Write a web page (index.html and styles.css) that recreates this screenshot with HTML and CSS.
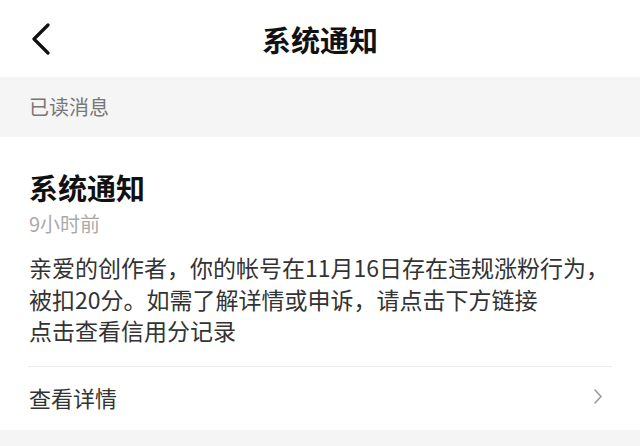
FILE: index.html
```html
<!DOCTYPE html>
<html>
<head>
  <meta charset="utf-8" />
  <title>系统通知</title>
  <link rel="stylesheet" href="styles.css">
</head>
<body>

<div class='topbar'>
  <div class='topbar-left'>
    <svg class='back' width="22" height="32" viewBox="0 0 22 32">
      <path d="M18 2 L4 16 L18 30" fill="none" stroke="#111" stroke-width="3.2" stroke-linecap="round" stroke-linejoin="round"/>
    </svg>
  </div>
  <div class='topbar-title'>系统通知</div>
  <div></div>
</div>

<div class='section-label'>已读消息</div>

<div class='card'>
  <div class='card-title'>系统通知</div>
  <div class='card-time'>9小时前</div>
  <div class='card-body'>
    亲爱的创作者，你的帐号在11月16日存在违规涨粉行为，<br>
    被扣20分。如需了解详情或申诉，请点击下方链接<br>
    点击查看信用分记录
  </div>
  <div class='card-link'>
    <span>查看详情</span>
    <svg class='arrow' width="10" height="17" viewBox="0 0 10 17">
      <path d="M2 2 L8 8.5 L2 15" fill="none" stroke="#9a9a9a" stroke-width="1.6" stroke-linecap="round" stroke-linejoin="round"/>
    </svg>
  </div>
</div>

</body>
</html>
```

FILE: styles.css
```css
*{margin:0;padding:0;}
body{
  background:#f5f5f5;
  font-family:"Noto Sans CJK SC","Noto Sans",sans-serif;
}
.topbar{
  height:77px;
  background:#fff;
  display:grid;
  grid-template-columns:1fr auto 1fr;
  align-items:center;
}
.topbar-left{
  padding-left:30px;
  display:flex;
  align-items:center;
}
.back{
  display:block;
  margin-top:1px;
}
.topbar-title{
  font-size:29px;
  font-weight:bold;
  color:#111;
  line-height:40px;
  margin-top:1px;
}
.section-label{
  height:60px;
  line-height:60px;
  padding-left:29px;
  font-size:20px;
  color:#777;
}
.card{
  background:#fff;
  padding:30px 28px 0;
}
.card-title{
  padding-left:1px;
  font-size:29px;
  font-weight:bold;
  color:#111;
  line-height:40px;
}
.card-time{
  margin-top:3px;
  padding-left:1px;
  font-size:20px;
  line-height:28px;
  color:#aaa;
}
.card-body{
  margin-top:14px;
  padding-left:1px;
  font-size:23px;
  line-height:31.5px;
  color:#333;
  padding-bottom:19px;
  border-bottom:1px solid #ececec;
}
.card-link{
  height:63px;
  display:flex;
  align-items:center;
  justify-content:space-between;
  padding-left:1px;
  padding-bottom:3px;
  box-sizing:border-box;
  font-size:22px;
  color:#333;
}
.arrow{
  display:block;
  margin-right:9px;
}
```
